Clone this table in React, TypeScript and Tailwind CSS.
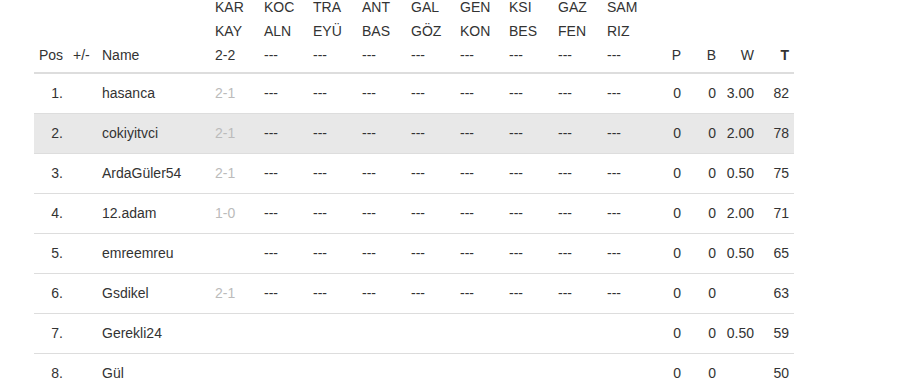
import React from "react";

const rounds: string[][] = [
  ["KAR", "KAY", "2-2"],
  ["KOC", "ALN", "---"],
  ["TRA", "EYÜ", "---"],
  ["ANT", "BAS", "---"],
  ["GAL", "GÖZ", "---"],
  ["GEN", "KON", "---"],
  ["KSI", "BES", "---"],
  ["GAZ", "FEN", "---"],
  ["SAM", "RIZ", "---"],
];

type Row = {
  pos: string;
  name: string;
  first: string;
  dashes: boolean;
  p: string;
  b: string;
  w: string;
  t: string;
  hl?: boolean;
};

const rows: Row[] = [
  { pos: "1.", name: "hasanca", first: "2-1", dashes: true, p: "0", b: "0", w: "3.00", t: "82" },
  { pos: "2.", name: "cokiyitvci", first: "2-1", dashes: true, p: "0", b: "0", w: "2.00", t: "78", hl: true },
  { pos: "3.", name: "ArdaGüler54", first: "2-1", dashes: true, p: "0", b: "0", w: "0.50", t: "75" },
  { pos: "4.", name: "12.adam", first: "1-0", dashes: true, p: "0", b: "0", w: "2.00", t: "71" },
  { pos: "5.", name: "emreemreu", first: "", dashes: true, p: "0", b: "0", w: "0.50", t: "65" },
  { pos: "6.", name: "Gsdikel", first: "2-1", dashes: true, p: "0", b: "0", w: "", t: "63" },
  { pos: "7.", name: "Gerekli24", first: "", dashes: false, p: "0", b: "0", w: "0.50", t: "59" },
  { pos: "8.", name: "Gül", first: "", dashes: false, p: "0", b: "0", w: "", t: "50" },
];

export default function App() {
  return (
    <div
      className="min-h-[387px] bg-white text-[#333] text-[14px] pl-[34px] -mt-[5px]"
      style={{ fontFamily: '"Liberation Sans", Arial, sans-serif' }}
    >
      <table className="table-fixed w-[760px] border-collapse">
        <colgroup>
          <col className="w-[34px]" />
          <col className="w-[29px]" />
          <col className="w-[113px]" />
          {rounds.map((_, i) => (
            <col key={i} className="w-[49px]" />
          ))}
          <col className="w-[35px]" />
          <col className="w-[35px]" />
          <col className="w-[38px]" />
          <col className="w-[35px]" />
        </colgroup>
        <thead>
          <tr className="align-bottom leading-[24px]">
            <th className="px-[5px] pb-[5px] pt-0 font-normal text-right border-b-2 border-[#ddd]">Pos</th>
            <th className="px-[5px] pb-[5px] pt-0 font-normal text-left border-b-2 border-[#ddd] whitespace-nowrap">+/-</th>
            <th className="px-[5px] pb-[5px] pt-0 font-normal text-left border-b-2 border-[#ddd]">Name</th>
            {rounds.map((r, i) => (
              <th key={i} className="px-[5px] pb-[5px] pt-0 font-normal text-left border-b-2 border-[#ddd] whitespace-nowrap">
                <div>{r[0]}</div>
                <div>{r[1]}</div>
                <div>{r[2]}</div>
              </th>
            ))}
            <th className="px-[5px] pb-[5px] pt-0 font-normal text-right border-b-2 border-[#ddd]">P</th>
            <th className="px-[5px] pb-[5px] pt-0 font-normal text-right border-b-2 border-[#ddd]">B</th>
            <th className="px-[5px] pb-[5px] pt-0 font-normal text-right border-b-2 border-[#ddd]">W</th>
            <th className="px-[5px] pb-[5px] pt-0 font-bold text-right border-b-2 border-[#ddd]">T</th>
          </tr>
        </thead>
        <tbody>
          {rows.map((r, idx) => (
            <tr
              key={idx}
              className={`leading-[23px] align-middle ${r.hl ? "bg-[#e8e8e8]" : ""} ${idx > 0 ? "border-t border-[#ddd]" : ""}`}
            >
              <td className="px-[5px] py-[8px] text-right">{r.pos}</td>
              <td className="px-[5px] py-[8px]"></td>
              <td className="px-[5px] py-[8px] whitespace-nowrap">{r.name}</td>
              <td className="px-[5px] py-[8px] text-[#bbb]">{r.first}</td>
              {rounds.slice(1).map((_, i) => (
                <td key={i} className="px-[5px] py-[8px]">
                  {r.dashes ? "---" : ""}
                </td>
              ))}
              <td className="px-[5px] py-[8px] text-right">{r.p}</td>
              <td className="px-[5px] py-[8px] text-right">{r.b}</td>
              <td className="px-[5px] py-[8px] text-right">{r.w}</td>
              <td className="px-[5px] py-[8px] text-right">{r.t}</td>
            </tr>
          ))}
        </tbody>
      </table>
    </div>
  );
}
